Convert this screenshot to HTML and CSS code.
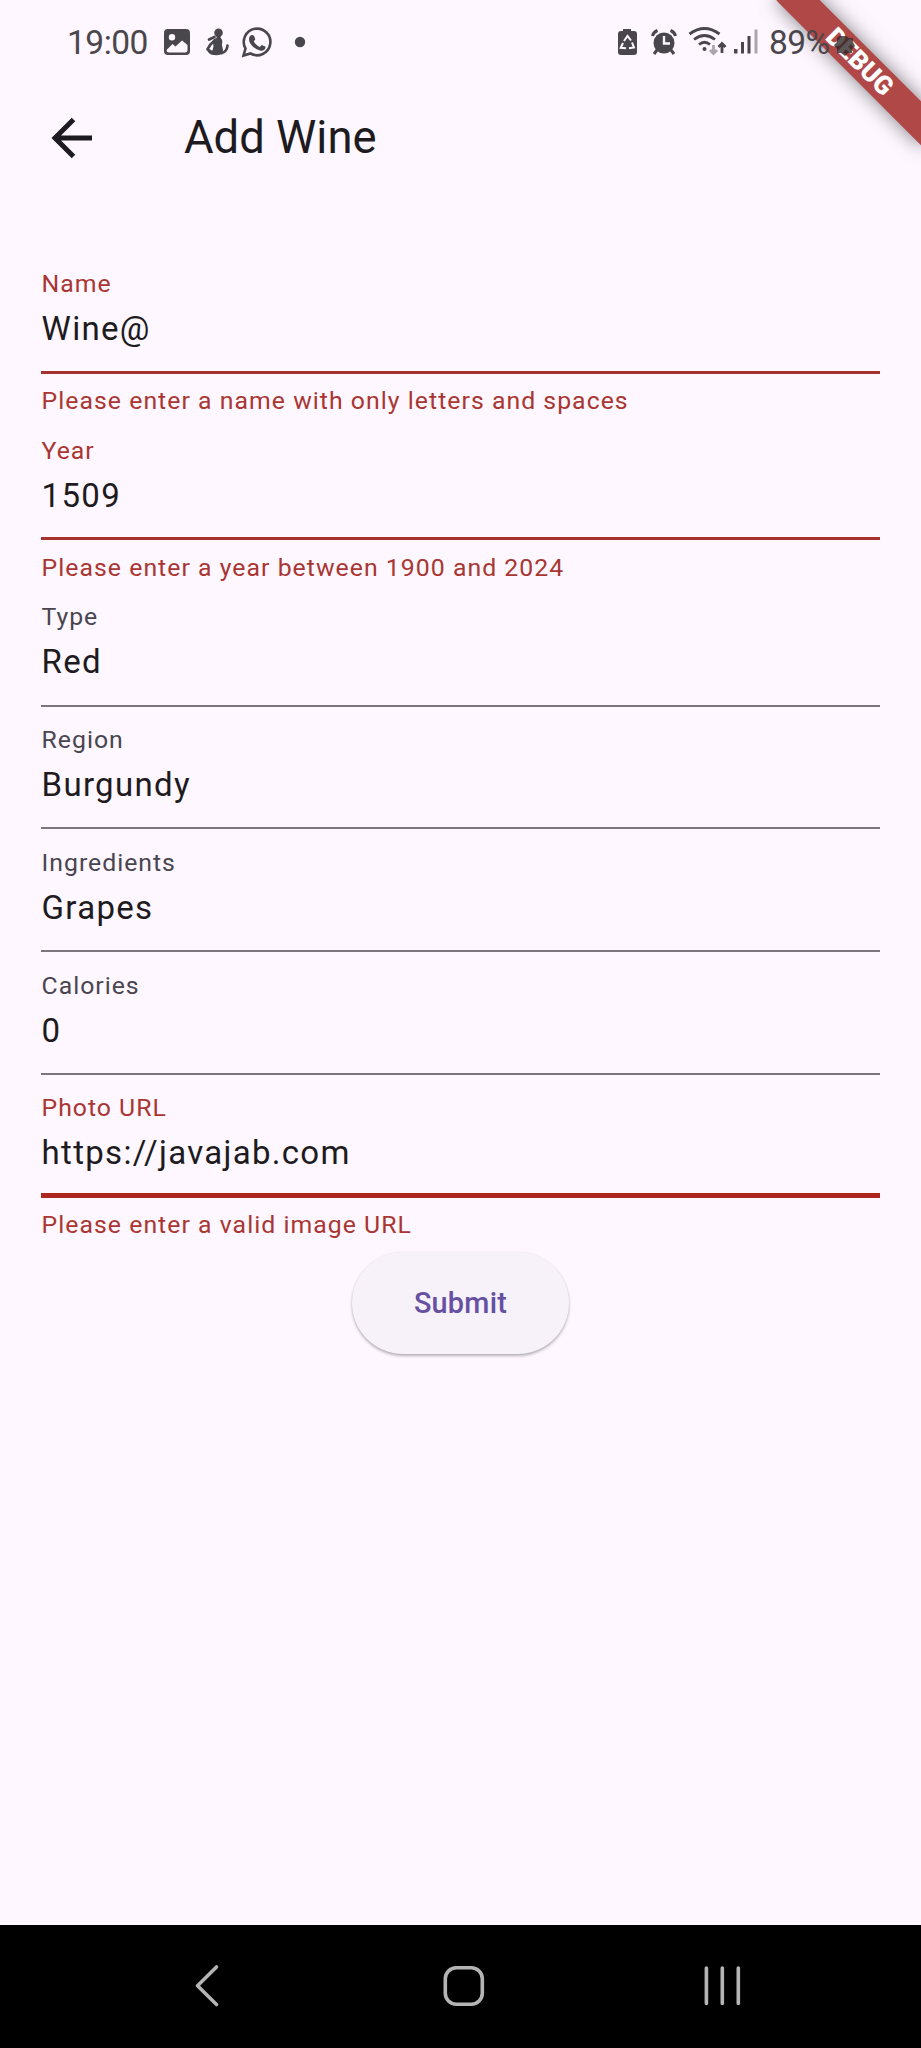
FILE: index.html
```
<!DOCTYPE html>
<html lang="en">
<head>
<meta charset="utf-8">
<title>Add Wine</title>
<link rel="stylesheet" href="styles.css">
</head>
<body>
<div class="screen">
  <div class="ribbon-clip"><div class="ribbon">DEBUG</div></div>
  <header class="status">
    <span class="clock">19:00</span>
    <svg class="notices" width="146" height="36" viewBox="162 24 146 36" fill="#49464c">
      <path fill-rule="evenodd" d="M168 29h18a4 4 0 0 1 4 4v18a4 4 0 0 1-4 4h-18a4 4 0 0 1-4-4v-18a4 4 0 0 1 4-4zM172 34a3.2 3.2 0 1 0 0 6.400a3.200 3.200 0 0 0 0-6.400zM166.500 50q0 2.500 2.500 2.500h16q2.500 0 2.500-2.500v-5l-5.500-4.500-6.500 6-3-2.500z"/>
      <circle cx="218.500" cy="32.700" r="4.300"/>
      <path d="M216 35h5l-.5 2.500 1 1.500q1.500 1.500 .3 5.500l1.200 5.500-.5 4q-4.500 2-11.500 .5-2-.5-3.500-3.500l5-.5 1-4-.8-5.500q1-2.500 4-3z"/>
      <path d="M214.500 40.500q-5 4-7 8.800l6 4M214.500 37l-5.500 2.500M222 53q5-1.500 5.500-7.500" fill="none" stroke="#49464c" stroke-width="2.700" stroke-linecap="round" stroke-linejoin="round"/>
      <g fill="none" stroke="#49464c" stroke-width="2.600"><path d="M243.500 55.500l2-7a13.300 13.300 0 1 1 5 5z"/></g>
      <path d="M250 36c2-2 4-1 4.500 1l.8 2.200-1.500 2.300c1.500 2.700 3.300 4.300 6 5.500l2-2 3.800 1.800c0 3-3 4.500-5.600 3.700-6-1.800-9.500-5.500-10.800-9.500-.5-2 0-3.700.8-5z"/>
      <circle cx="300" cy="42" r="5.200"/>
    </svg>
    <svg class="signals" width="144" height="36" viewBox="616 24 144 36" fill="#49464c">
      <path d="M623 29h8v2h3a3 3 0 0 1 3 3v18a3 3 0 0 1-3 3h-13a3 3 0 0 1-3-3v-18a3 3 0 0 1 3-3h2z"/>
      <g fill="none" stroke="#fef7ff" stroke-width="2"><path d="M624 41l3.500-5 3.500 4.500M632 42.500l2 5-5 .8M626 48.300l-5.300-.5 2.300-4.800"/></g>
      <circle cx="664" cy="43" r="10.500"/><path d="M657 50l-3 4M671 50l3 4M652.500 36q1-4 5-5.500M675.500 36q-1-4-5-5.500" fill="none" stroke="#49464c" stroke-width="3"/>
      <path d="M664 36v7.500h6" fill="none" stroke="#fef7ff" stroke-width="2.400"/>
      <g fill="none" stroke="#49464c" stroke-width="2.800"><path d="M689.500 34q15-11 30 0M694 39.500q10.500-8 21 0M699 44.500q5.500-4.500 11 0"/><path d="M722 53v-8M718.500 47l3.500-3.500 3.500 3.500"/><path stroke="#aaa6ad" d="M713.500 45v8M710 50l3.500 3.500 3.500-3.500"/></g>
      <circle cx="704.500" cy="49" r="2"/>
      <path d="M734 49h3.500v4.500H734zM741 42h3v11.500h-3zM747.500 36h3v17.500h-3z"/><path fill="#aaa6ad" d="M754.500 29.500h3v24h-3z"/>
    </svg>
    <span class="percent">89%</span>
    <svg class="battery" width="22" height="22" viewBox="0 0 22 22"><path fill="#2e2626" opacity=".78" d="M6 1h7l3 2h4v4l2 4-3 3v4h-4l-3 3-4-3H4v-4l-3-4 3-3V3z"/></svg>
  </header>
  <div class="appbar">
    <svg class="back" width="42" height="42" viewBox="0 0 42 42" fill="none" stroke="#1d1b20" stroke-width="5"><path d="M42 21H5M23.500 2.500L5 21l18.500 18.500"/></svg>
    <h1 class="title">Add Wine</h1>
  </div>
  <main class="form">
    <div class="field invalid"><label class="label">Name</label><div class="value">Wine@</div></div>
    <p class="error">Please enter a name with only letters and spaces</p>
    <div class="field invalid"><label class="label">Year</label><div class="value">1509</div></div>
    <p class="error">Please enter a year between 1900 and 2024</p>
    <div class="field"><label class="label">Type</label><div class="value">Red</div></div>
    <div class="field"><label class="label">Region</label><div class="value">Burgundy</div></div>
    <div class="field"><label class="label">Ingredients</label><div class="value">Grapes</div></div>
    <div class="field"><label class="label">Calories</label><div class="value">0</div></div>
    <div class="field invalid focused"><label class="label">Photo URL</label><div class="value">https://javajab.com</div></div>
    <p class="error">Please enter a valid image URL</p>
    <button class="submit">Submit</button>
  </main>
  <nav class="navbar">
    <svg width="921" height="123" viewBox="0 1925 921 123" fill="none" stroke="#b4b4b4" stroke-width="3.600" stroke-linecap="round" stroke-linejoin="round">
      <path d="M216.500 1967l-19 18.700 19 18.800"/>
      <rect x="445.300" y="1967.700" width="37" height="36.600" rx="11"/>
      <path d="M706.400 1968v35.500M722.300 1968v35.500M738.300 1968v35.500"/>
    </svg>
  </nav>
</div>
</body>
</html>
```
FILE: styles.css
```
* { box-sizing: border-box; }
body { margin: 0; font-family: Roboto, sans-serif; }
.screen {
  position: relative;
  display: flex;
  flex-direction: column;
  width: 921px;
  height: 2048px;
  overflow: hidden;
  background: #fef7ff;
  color: #1d1b20;
}
.status {
  position: relative;
  display: flex;
  align-items: center;
  height: 84px;
  padding-left: 67px;
  color: #49464c;
  font-size: 33.5px;
}
.clock { width: 95px; letter-spacing: -0.5px; }
.signals { margin-left: 308px; }
.percent { margin-left: 9px; width: 64px; letter-spacing: -0.6px; }
.battery { position: relative; top: 4px; }
.ribbon-clip {
  position: absolute;
  top: 0;
  right: 0;
  width: 240px;
  height: 240px;
  overflow: hidden;
}
.ribbon {
  position: absolute;
  top: 71.6px;
  left: 137.7px;
  width: 204.6px;
  height: 30.7px;
  transform: rotate(45deg);
  transform-origin: 102.3px -71.6px;
  background: #b04848;
  box-shadow: 0 0 19px rgba(0, 0, 0, 0.5);
  color: #fff;
  font-size: 26px;
  font-weight: 900;
  line-height: 30.7px;
  text-align: center;
}
.appbar {
  display: flex;
  align-items: center;
  height: 108px;
  padding-left: 50px;
}
.title {
  margin: -2px 0 0 92px;
  font-size: 45.4px;
  font-weight: 400;
}
.form {
  display: flex;
  flex-direction: column;
  flex: 1;
  padding: 59px 41px 0;
}
.field {
  height: 122.8px;
  padding: 19.4px 0 0 0.6px;
  border-bottom: 2.6px solid #7a757f;
}
.field.invalid { border-bottom: 3px solid #a53230; }
.field.focused { border-bottom: 5px solid #ae2620; }
.label {
  display: block;
  color: #49454f;
  font-size: 24.8px;
  line-height: 28px;
  letter-spacing: 0.98px;
}
.invalid .label { color: #a93632; }
.value {
  margin-top: 11px;
  font-size: 33px;
  line-height: 40px;
  letter-spacing: 1.3px;
}
.error {
  height: 43.6px;
  margin: 0;
  padding: 13.4px 0 0 0.6px;
  color: #a93632;
  font-size: 24.8px;
  line-height: 28px;
  letter-spacing: 1.03px;
}
.submit {
  align-self: center;
  width: 217px;
  height: 102.4px;
  margin-top: 10.2px;
  border: 0;
  border-radius: 52px;
  background: #f7f2fa;
  box-shadow: 0 2px 3px rgba(0, 0, 0, 0.28), 0 0 2px rgba(0, 0, 0, 0.06);
  color: #6550a2;
  font: 500 28.8px Roboto, sans-serif;
  letter-spacing: 0.26px;
}
.navbar { display: flex; height: 123px; background: #000; }
```
